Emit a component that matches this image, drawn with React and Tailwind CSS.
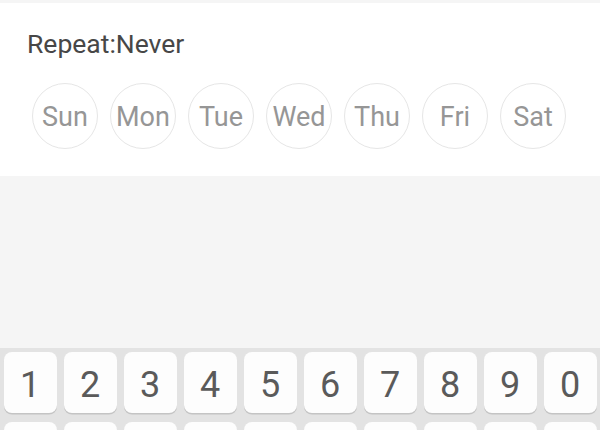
import React from "react";

const days = ["Sun", "Mon", "Tue", "Wed", "Thu", "Fri", "Sat"];
const digits = ["1", "2", "3", "4", "5", "6", "7", "8", "9", "0"];

const DayButton = ({ label }) => (
  <div className="flex h-[66px] w-[66px] items-center justify-center rounded-full border border-[#e6e6e6] pt-[2px] text-[27px] leading-[30px] text-[#969696]">
    {label}
  </div>
);

const Key = ({ children }) => (
  <div className="flex h-[61px] flex-1 items-center justify-center rounded-[8px] bg-[#fdfdfd] shadow-[0_1.5px_0_#c4c4c4]">
    {children}
  </div>
);

export default function App() {
  return (
    <div className="flex h-[430px] w-[600px] flex-col overflow-hidden bg-[#f5f5f5] font-['Roboto',sans-serif]">
      <div className="mt-[3px] flex flex-col bg-white pb-[27px] pt-[26px]">
        <div className="pl-[27px] text-[26.5px] leading-[30px] text-[#474747]">Repeat:Never</div>
        <div className="mt-[24px] flex gap-[12px] pl-[32px]">
          {days.map((d) => (
            <DayButton key={d} label={d} />
          ))}
        </div>
      </div>

      <div className="flex-1" />

      <div className="flex h-[82px] flex-col gap-[9px] bg-[#e3e3e3] px-[3.5px] pt-[4px]">
        <div className="flex gap-[7px]">
          {digits.map((n) => (
            <Key key={n}>
              <span className="pt-[4px] text-[36px] leading-none text-[#5a5a5a]">{n}</span>
            </Key>
          ))}
        </div>
        <div className="flex gap-[7px]">
          {digits.map((n) => (
            <Key key={n} />
          ))}
        </div>
      </div>
    </div>
  );
}
